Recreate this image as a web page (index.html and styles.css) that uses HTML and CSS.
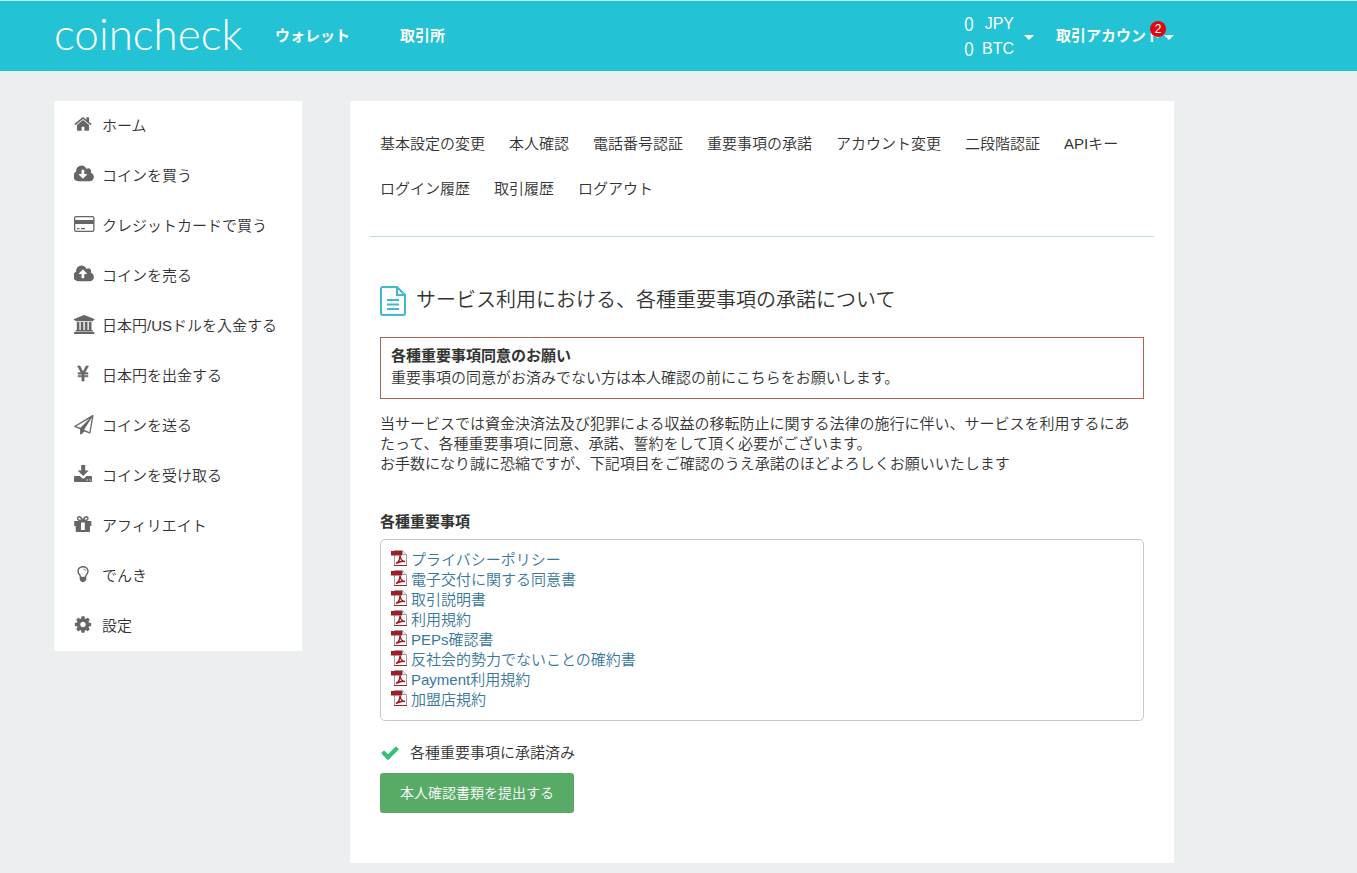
FILE: index.html
```
<!DOCTYPE html>
<html lang="ja">
<head>
<meta charset="utf-8">
<title>coincheck</title>
<link rel="stylesheet" href="styles.css">
</head>
<body>
<svg class="sprite" aria-hidden="true">
  <symbol id="pdf" viewBox="0 0 16 16">
    <path d="M3.500 .5h8l4 4v11h-12z" fill="#fff" stroke="#a89a9a"/>
    <path d="M11.500 .5v4h4" fill="#eee" stroke="#a89a9a"/>
    <path d="M0 1h11v4.500H0z" fill="#9c1f27"/>
    <path d="M5 13.500c2-1 4-4 4-8 .5 4 2.500 6 5 6-3-1-6 .5-9 2z" fill="none" stroke="#a3141d" stroke-width="1.400"/>
    <path d="M3 15.500h13" stroke="#8c2a30"/>
  </symbol>
</svg>
<header class="header">
  <div class="header-inner">
    <a class="logo" href="#">coincheck</a>
    <nav class="global-nav">
      <a href="#">ウォレット</a>
      <a href="#">取引所</a>
    </nav>
    <div class="header-tools">
      <button class="balance" type="button">
        <span class="amounts">
          <span><span class="zero">0</span>JPY</span>
          <span><span class="zero">0</span>BTC</span>
        </span>
        <span class="caret"></span>
      </button>
      <button class="account" type="button">取引アカウント<span class="caret"></span><span class="badge">2</span></button>
    </div>
  </div>
</header>
<div class="page">
  <nav class="sidebar">
    <a href="#"><svg viewBox="0 0 22 22"><path transform="translate(-.4 -.4) scale(.0105)" d="M1472 992v480q0 26-19 45t-45 19h-384v-384h-256v384h-384q-26 0-45-19t-19-45v-480q0-1 .5-3t.5-3l575-474 575 474q1 2 1 6zm223-69l-62 74q-8 9-21 11h-3q-13 0-21-7l-692-577-692 577q-12 8-24 7-13-2-21-11l-62-74q-8-10-7-23.5t11-21.500l719-599q32-26 76-26t76 26l244 204v-195q0-14 9-23t23-9h192q14 0 23 9t9 23v408l219 182q10 8 11 21.500t-7 23.500z"/></svg>ホーム</a>
    <a href="#"><svg viewBox="0 0 22 22"><path transform="translate(0 -1) scale(.0107 .0112)" d="M1216 928q0-14-9-23t-23-9h-224v-352q0-13-9.500-22.500t-22.500-9.500h-192q-13 0-22.500 9.500t-9.500 22.500v352h-224q-13 0-22.500 9.500t-9.500 22.500q0 14 9 23l352 352q9 9 23 9t23-9l351-351q10-12 10-24zm640 224q0 159-112.500 271.500t-271.500 112.500h-1088q-185 0-316.500-131.500t-131.500-316.500q0-130 70-240t188-165q-2-30-2-43 0-212 150-362t362-150q156 0 285.500 87t188.500 231q71-62 166-62 106 0 181 75t75 181q0 76-41 138 130 31 213.500 135.500t83.500 238.500z"/></svg>コインを買う</a>
    <a href="#"><svg viewBox="0 0 22 22"><path fill-rule="evenodd" d="M2 1h16.500a2 2 0 0 1 2 2v12a2 2 0 0 1-2 2H2a2 2 0 0 1-2-2V3a2 2 0 0 1 2-2zm0 1.300a.7.7 0 0 0-.7.7v2h17.900V3a.7.7 0 0 0-.7-.7zM1.300 9v6c0 .4.300.7.700.7h16.500c.4 0 .7-.3.700-.7V9zM3 13h2.500v1.300H3zm4 0h4v1.300H7z"/></svg>クレジットカードで買う</a>
    <a href="#"><svg viewBox="0 0 22 22"><path transform="translate(0 -1) scale(.0107 .0112)" d="M1216 864q0-14-9-23l-352-352q-9-9-23-9t-23 9l-351 351q-10 12-10 24 0 14 9 23t23 9h224v352q0 13 9.500 22.500t22.500 9.500h192q13 0 22.500-9.500t9.500-22.500v-352h224q13 0 22.500-9.500t9.500-22.500zm640 288q0 159-112.500 271.500t-271.500 112.500h-1088q-185 0-316.500-131.500t-131.500-316.500q0-130 70-240t188-165q-2-30-2-43 0-212 150-362t362-150q156 0 285.500 87t188.500 231q71-62 166-62 106 0 181 75t75 181q0 76-41 138 130 31 213.500 135.500t83.500 238.500z"/></svg>コインを売る</a>
    <a href="#"><svg viewBox="0 0 22 22"><path d="M10.200 0 20.400 4v1.300H19v.9H1.500v-.9H0V4zM2.800 7h2.600v8h1.300V7h2.700v8h1.400V7h2.700v8h1.300V7h2.700v8h.6q.8 0 .8.800v.6H1.500v-.6q0-.8.800-.8h.5zM.8 17h18.900q.7 0 .7.700V19H0v-1.300q0-.7.800-.7z"/></svg>日本円/USドルを入金する</a>
    <a href="#"><svg viewBox="0 0 22 22"><path stroke="#666" stroke-width=".6" d="M3.500 1H6l3 6 3-6h2.500l-3.600 6.700H14v1.400h-3.900v1.300H14v1.400h-3.900V16H7.900v-4.200H4v-1.400h3.900V9.100H4V7.700h3.100z"/></svg>日本円を出金する</a>
    <a href="#"><svg viewBox="0 0 22 22"><path fill-rule="evenodd" d="M19.200.1q.4.300.3.800l-3 17q-.1.700-.9.500l-5.200-2-3 2.900q-.9.600-1.300-.4v-4.600l-5.600-2.200q-.9-.6-.1-1.200L18.400.1q.5-.3.800 0zM15.400 16.900 17.900 2.600 10 14.700zM2.300 11.200l4.200 1.600L15.600 3.600z"/></svg>コインを送る</a>
    <a href="#"><svg viewBox="0 0 22 22"><path fill-rule="evenodd" d="M7.200 0h4v5.500h3.600L9.200 11 3.600 5.500h3.600zM1 11h4.900l2 1.900q1.300 1 2.600 0l2-1.900H17q1 0 1 1v4q0 1-1 1H1q-1 0-1-1v-4q0-1 1-1zm11.500 3.400v1.200h1.300v-1.200zm3 0v1.200h1.300v-1.200z"/></svg>コインを受け取る</a>
    <a href="#"><svg viewBox="0 0 22 22"><path fill-rule="evenodd" d="M.5 6h4.800C2 5.600 2.300 1 5.200 1 7 1 8.100 2.700 8.800 4 9.500 2.700 10.600 1 12.400 1c2.900 0 3.200 4.600-.1 5H17q.4 0 .4.500V11H16v5q0 1-1 1H2.700q-1 0-1-1v-5H.2V6.500q0-.5.300-.5zM5.200 2.500c-1.300 0-1.300 2.100 0 2.100h2.200C6.900 3.700 6.200 2.500 5.200 2.500zm7.200 0c-1 0-1.700 1.200-2.200 2.100h2.200c1.300 0 1.300-2.100 0-2.100zM7 7.500V15h3.800V7.500z"/></svg>アフィリエイト</a>
    <a href="#"><svg viewBox="0 0 22 22"><path fill-rule="evenodd" d="M9 1c3.300 0 5.700 2.300 5.700 5.200 0 2.800-2.300 3.800-2.500 5.900.5.700.4 1.100-.1 1.600.4.600.2 1.200-.3 1.500.1 1-.8 1.200-1.300 1.200-.6 1-2.400 1-3 0-.5 0-1.400-.2-1.300-1.200-.5-.3-.7-.9-.3-1.500-.5-.5-.6-.9-.1-1.600C5.600 10 3.300 9 3.300 6.200 3.300 3.300 5.700 1 9 1zm0 1.400c-2.500 0-4.300 1.700-4.300 3.800C4.700 8.300 7 9.300 7.200 11.700h3.600C11 9.300 13.300 8.300 13.300 6.200c0-2.100-1.800-3.800-4.300-3.800zm.2 1.400c1.500 0 2.700.8 2.700 2h-.8c0-.7-.9-1.200-1.900-1.200z"/></svg>でんき</a>
    <a href="#"><svg viewBox="0 0 22 22"><path transform="translate(-.6 -.1) scale(.0107)" d="M1152 896q0-106-75-181t-181-75-181 75-75 181 75 181 181 75 181-75 75-181zm512-109v222q0 12-8 23t-20 13l-185 28q-19 54-39 91 35 50 107 138 10 12 10 25t-9 23q-27 37-99 108t-94 71q-12 0-26-9l-138-108q-44 23-91 38-16 136-29 186-7 28-36 28h-222q-14 0-24.500-8.500t-11.500-21.500l-28-184q-49-16-90-37l-141 107q-10 9-25 9-14 0-25-11-126-114-165-168-7-10-7-23 0-12 8-23 15-21 51-66.500t54-70.500q-27-50-41-99l-183-27q-13-2-21-12.500t-8-23.500v-222q0-12 8-23t19-13l186-28q14-46 39-92-40-57-107-138-10-12-10-24 0-10 9-23 26-36 98.500-107.500t94.500-71.500q13 0 26 10l138 107q44-23 91-38 16-136 29-186 7-28 36-28h222q14 0 24.500 8.500t11.500 21.500l28 184q49 16 90 37l142-107q9-9 24-9 13 0 25 10 129 119 165 170 7 8 7 22 0 12-8 23-15 21-51 66.500t-54 70.500q26 50 41 98l183 28q13 2 21 12.500t8 23.500z"/></svg>設定</a>
  </nav>
  <main class="main">
    <nav class="tabs">
      <a href="#">基本設定の変更</a>
      <a href="#">本人確認</a>
      <a href="#">電話番号認証</a>
      <a href="#">重要事項の承諾</a>
      <a href="#">アカウント変更</a>
      <a href="#">二段階認証</a>
      <a href="#">APIキー</a>
      <a href="#">ログイン履歴</a>
      <a href="#">取引履歴</a>
      <a href="#">ログアウト</a>
    </nav>
    <section class="content">
      <h1><svg viewBox="0 0 26 30"><path d="M1 3a2 2 0 0 1 2-2h14l8 8v18a2 2 0 0 1-2 2H3a2 2 0 0 1-2-2zM17 1v8h8M7 14h12M7 18.500h12M7 23h12" fill="none" stroke="#3fb9cb" stroke-width="2"/></svg>サービス利用における、各種重要事項の承諾について</h1>
      <div class="notice">
        <strong>各種重要事項同意のお願い</strong>
        <p>重要事項の同意がお済みでない方は本人確認の前にこちらをお願いします。</p>
      </div>
      <p class="lead">当サービスでは資金決済法及び犯罪による収益の移転防止に関する法律の施行に伴い、サービスを利用するにあたって、各種重要事項に同意、承諾、誓約をして頂く必要がございます。<br>お手数になり誠に恐縮ですが、下記項目をご確認のうえ承諾のほどよろしくお願いいたします</p>
      <h2>各種重要事項</h2>
      <ul class="documents">
        <li><a href="#"><svg><use href="#pdf"/></svg>プライバシーポリシー</a></li>
        <li><a href="#"><svg><use href="#pdf"/></svg>電子交付に関する同意書</a></li>
        <li><a href="#"><svg><use href="#pdf"/></svg>取引説明書</a></li>
        <li><a href="#"><svg><use href="#pdf"/></svg>利用規約</a></li>
        <li><a href="#"><svg><use href="#pdf"/></svg>PEPs確認書</a></li>
        <li><a href="#"><svg><use href="#pdf"/></svg>反社会的勢力でないことの確約書</a></li>
        <li><a href="#"><svg><use href="#pdf"/></svg>Payment利用規約</a></li>
        <li><a href="#"><svg><use href="#pdf"/></svg>加盟店規約</a></li>
      </ul>
      <p class="agreed"><svg viewBox="120 260 1552 1270"><path d="M1671 566q0 40-28 68l-724 724-136 136q-28 28-68 28t-68-28l-136-136-362-362q-28-28-28-68t28-68l136-136q28-28 68-28t68 28l294 295 656-657q28-28 68-28t68 28l136 136q28 28 28 68z"/></svg>各種重要事項に承諾済み</p>
      <button class="submit" type="button">本人確認書類を提出する</button>
    </section>
  </main>
</div>
</body>
</html>
```
FILE: styles.css
```
* {
  box-sizing: border-box;
}

body {
  margin: 0;
  background: #ebeff0;
  color: #333;
  font: 350 15px/20px "Liberation Sans", "Noto Sans CJK JP", sans-serif;
}

a {
  color: inherit;
  text-decoration: none;
}

button {
  border: 0;
  background: none;
  color: inherit;
  font: inherit;
  cursor: pointer;
}

h1, h2, p, ul {
  margin: 0;
  padding: 0;
}

.sprite {
  display: none;
}

.header {
  border-top: 1px solid #b5f3f5;
  background: #23c2d5;
  color: #fff;
}

.header-inner, .page {
  display: flex;
  max-width: 1174px;
  padding-left: 54px;
}

.header-inner {
  height: 70px;
  align-items: center;
}

.logo {
  width: 221px;
  padding-bottom: 6px;
  font: 300 44px/64px Lato, sans-serif;
}

.global-nav {
  display: flex;
  gap: 50px;
  font-weight: bold;
}

.header-tools {
  display: flex;
  gap: 22px;
  margin-left: auto;
}

.balance, .account {
  display: flex;
  align-items: center;
  padding: 0;
}

.balance {
  gap: 10px;
}

.amounts {
  display: flex;
  flex-direction: column;
  font-size: 16px;
  line-height: 25px;
}

.amounts > span {
  display: flex;
  justify-content: space-between;
  gap: 8px;
}

.zero {
  font-family: "Noto Sans CJK JP", sans-serif;
  font-size: 18px;
}

.caret {
  margin-top: 2px;
  border: 5px solid transparent;
  border-top-color: #fff;
  border-bottom: 0;
}

.account {
  position: relative;
  gap: 3px;
  font-weight: bold;
}

.badge {
  position: absolute;
  top: 10px;
  right: 8px;
  width: 16px;
  border-radius: 50%;
  background: #e0080c;
  font-size: 12px;
  font-weight: normal;
  line-height: 16px;
}

.page {
  align-items: flex-start;
  gap: 48px;
  padding-top: 30px;
  padding-bottom: 10px;
}

.sidebar {
  flex: 0 0 248px;
  background: #fff;
}

.sidebar a {
  display: flex;
  align-items: center;
  gap: 6px;
  height: 50px;
  padding-left: 20px;
}

.sidebar svg {
  width: 22px;
  height: 22px;
  fill: #666;
}

.main {
  flex: 1;
  padding: 20px 20px 50px;
  background: #fff;
}

.tabs {
  display: flex;
  flex-wrap: wrap;
  gap: 0 24px;
  padding: 0 10px 25px;
  border-bottom: 1px solid #b9dfdc;
  line-height: 45px;
}

.content {
  padding: 47px 10px 0;
}

h1 {
  display: flex;
  align-items: flex-end;
  gap: 10px;
  font-size: 20px;
  font-weight: inherit;
  line-height: 32px;
}

h1 svg {
  width: 26px;
  height: 30px;
}

.notice {
  margin: 21px 0 15px;
  padding: 7px 10px 9px;
  border: 1px solid #b5604f;
  line-height: 22px;
}

h2 {
  margin: 38px 0 7px;
  font-size: 15px;
  line-height: 20px;
}

.documents {
  padding: 10px;
  border: 1px solid #c8c8c8;
  border-radius: 5px;
  color: #38789c;
  list-style: none;
}

.documents a {
  display: flex;
  gap: 4px;
}

.documents svg {
  width: 16px;
  height: 16px;
}

.agreed {
  display: flex;
  align-items: center;
  gap: 10px;
  margin: 22px 0 10px;
}

.agreed svg {
  width: 20px;
  height: 14px;
  fill: #33c173;
}

.submit {
  height: 40px;
  padding: 0 20px;
  border-radius: 3px;
  background: #58ab67;
  color: #fff;
  font-size: 14px;
}
```
